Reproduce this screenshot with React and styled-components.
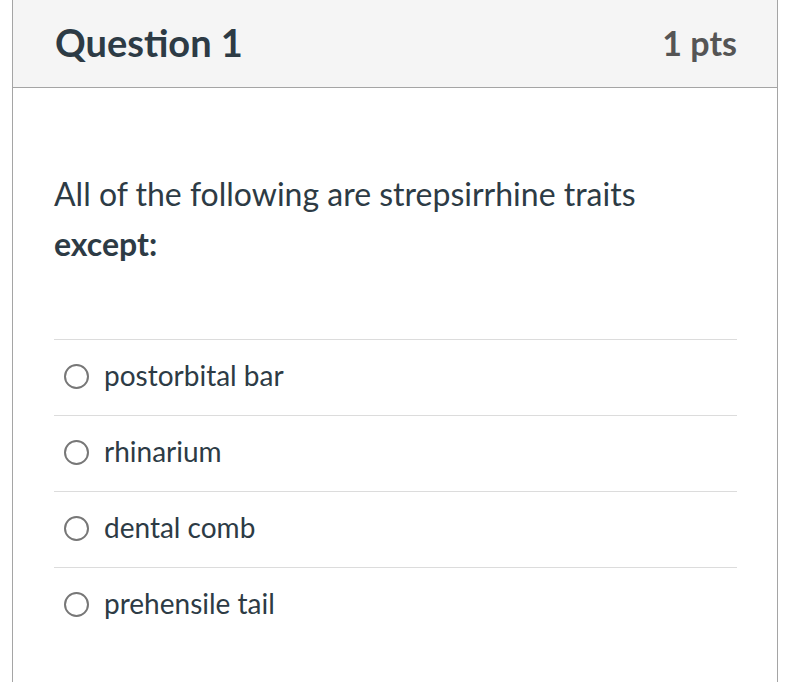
import React from "react";
import styled, { createGlobalStyle } from "styled-components";

const Global = createGlobalStyle`
  html, body { margin: 0; padding: 0; background: #fff; }
  body { font-family: Lato, "Liberation Sans", sans-serif; color: #2d3b45; }
`;

const Page = styled.div`
  padding-left: 12px;
  width: 766px;
`;

const Card = styled.div`
  border-left: 1px solid #a5a5a5;
  border-right: 1px solid #a5a5a5;
  height: 682px;
  box-sizing: border-box;
`;

const Header = styled.div`
  display: flex;
  justify-content: space-between;
  align-items: center;
  height: 88px;
  box-sizing: border-box;
  padding: 0 40px 3px 42px;
  background: #f5f5f5;
  border-bottom: 1px solid #a5a5a5;
`;

const Title = styled.div`
  font-size: 38px;
  font-weight: 700;
  color: #2d3b45;
`;

const Points = styled.div`
  font-size: 34px;
  font-weight: 700;
  color: #555;
`;

const Body = styled.div`
  padding: 81px 40px 0 41px;
`;

const Prompt = styled.div`
  font-size: 32px;
  line-height: 50px;
  color: #2d3b45;
  margin-bottom: 70px;
  b { font-weight: 700; }
`;

const Answer = styled.label`
  display: flex;
  align-items: center;
  gap: 15px;
  height: 75px;
  box-sizing: content-box;
  border-top: 1px solid #dcdcdc;
  padding: 0 0 0 10px;
  font-size: 28px;
  color: #2d3b45;
`;

const AnswerInner = styled.span`
  display: flex;
  align-items: center;
  gap: 15px;
  margin-top: -5px;
`;

const Radio = styled.span`
  width: 25px;
  height: 25px;
  border: 2px solid #777;
  border-radius: 50%;
  box-sizing: border-box;
  flex: none;
  margin-top: 3px;
`;

const answers = ["postorbital bar", "rhinarium", "dental comb", "prehensile tail"];

export default function App() {
  return (
    <>
      <Global />
      <Page>
        <Card>
          <Header>
            <Title>Question 1</Title>
            <Points>1 pts</Points>
          </Header>
          <Body>
            <Prompt>
              All of the following are strepsirrhine traits
              <br />
              <b>except:</b>
            </Prompt>
            {answers.map((a) => (
              <Answer key={a}>
                <AnswerInner>
                  <Radio />
                  {a}
                </AnswerInner>
              </Answer>
            ))}
          </Body>
        </Card>
      </Page>
    </>
  );
}
